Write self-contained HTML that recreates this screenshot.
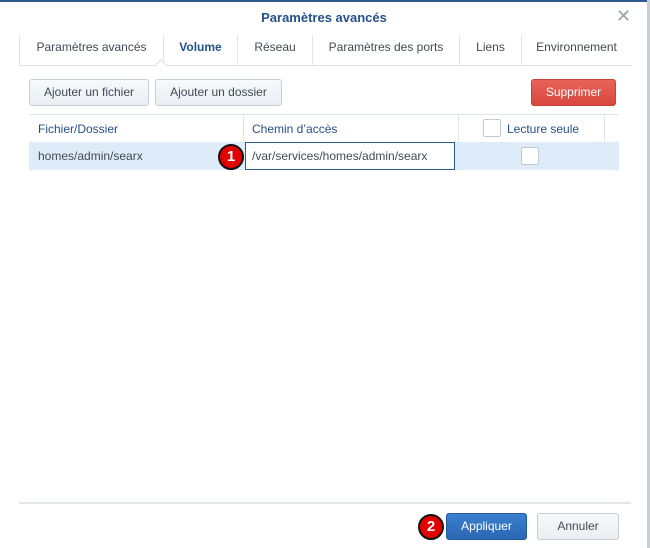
<!DOCTYPE html>
<html><head><meta charset="utf-8"><style>
*{box-sizing:border-box;margin:0;padding:0}
body{width:650px;height:548px;background:#fff;font-family:"Liberation Sans",sans-serif;font-size:12px;color:#414b55;position:relative;overflow:hidden}
.abs{position:absolute}
.topline{left:0;top:0;width:648px;height:2px;background:#2f5b8c}
.rline{left:647px;top:0;width:3px;height:548px;background:#c8cdd2}
.title{left:0;top:10px;width:648px;text-align:center;font-weight:bold;font-size:13px;color:#25508a}
.close{left:616px;top:6px;font-size:18px;color:#9aa3ab}
.tabs{left:19px;top:35px;width:612px;height:31px;border-bottom:1px solid #dde2e7}
.tab{position:absolute;top:0;height:30px;line-height:24px;font-size:12px;color:#414b55;text-align:center;border-left:1px solid #e1e5ea}
.btn{position:absolute;height:27px;line-height:25px;border:1px solid #c6ced6;border-radius:3px;background:linear-gradient(#f7f9fb,#eaeef2);text-align:center;font-size:12px;color:#414b55}
.hdr{left:29px;top:114px;width:590px;height:28px;border-top:1px solid #dde3ea}
.row{left:29px;top:142px;width:590px;height:28px;background:#deebf9}
.cb{position:absolute;width:18px;height:18px;border:1px solid #c3cad2;background:#fff;border-radius:2px}
.badge{position:absolute;width:26px;height:26px;border-radius:50%;background:#e30000;border:2px solid #111;color:#fff;font-weight:bold;font-size:15px;text-align:center;line-height:22px}
</style></head><body>
<div class="abs topline"></div>
<div class="abs rline"></div>
<div class="abs title">Paramètres avancés</div>
<div class="abs close">✕</div>
<div class="abs tabs">
 <div class="tab" style="left:0;width:144px">Paramètres avancés</div>
 <div class="tab" style="left:144px;width:74px;font-weight:bold;color:#25508a">Volume</div>
 <div class="tab" style="left:218px;width:75px">Réseau</div>
 <div class="tab" style="left:293px;width:147px">Paramètres des ports</div>
 <div class="tab" style="left:440px;width:62px">Liens</div>
 <div class="tab" style="left:502px;width:110px">Environnement</div>
</div>
<div class="abs" style="left:156px;top:61px;width:10px;height:10px;background:#fff;border-left:1px solid #dde2e7;border-top:1px solid #dde2e7;transform:rotate(45deg)"></div>
<div class="btn" style="left:29px;top:79px;width:120px">Ajouter un fichier</div>
<div class="btn" style="left:155px;top:79px;width:127px">Ajouter un dossier</div>
<div class="btn" style="left:531px;top:79px;width:85px;background:linear-gradient(#e8635a,#d8473e);border-color:#c9423a;color:#fff">Supprimer</div>
<div class="abs hdr">
 <div class="abs" style="left:9px;top:7px;color:#25508a">Fichier/Dossier</div>
 <div class="abs" style="left:214px;top:0;width:1px;height:28px;background:#e1e5ea"></div>
 <div class="abs" style="left:223px;top:7px;color:#25508a">Chemin d’accès</div>
 <div class="abs" style="left:429px;top:0;width:1px;height:28px;background:#e1e5ea"></div>
 <div class="cb" style="left:454px;top:4px"></div>
 <div class="abs" style="left:478px;top:7px;color:#25508a">Lecture seule</div>
 <div class="abs" style="left:575px;top:0;width:1px;height:28px;background:#e1e5ea"></div>
</div>
<div class="abs row">
 <div class="abs" style="left:9px;top:7px">homes/admin/searx</div>
 <div class="abs" style="left:216px;top:0;width:210px;height:28px;background:#fff;border:1px solid #2c5d92"></div>
 <div class="abs" style="left:223px;top:7px">/var/services/homes/admin/searx</div>
 <div class="cb" style="left:492px;top:5px"></div>
</div>
<div class="badge" style="left:218px;top:144px">1</div>
<div class="abs" style="left:19px;top:502px;width:612px;height:2px;background:#e3e6e9"></div>
<div class="btn" style="left:446px;top:513px;width:81px;background:linear-gradient(#3a7fcf,#2a67b3);border-color:#235a9e;color:#fff">Appliquer</div>
<div class="btn" style="left:537px;top:513px;width:82px">Annuler</div>
<div class="badge" style="left:418px;top:514px">2</div>
</body></html>
